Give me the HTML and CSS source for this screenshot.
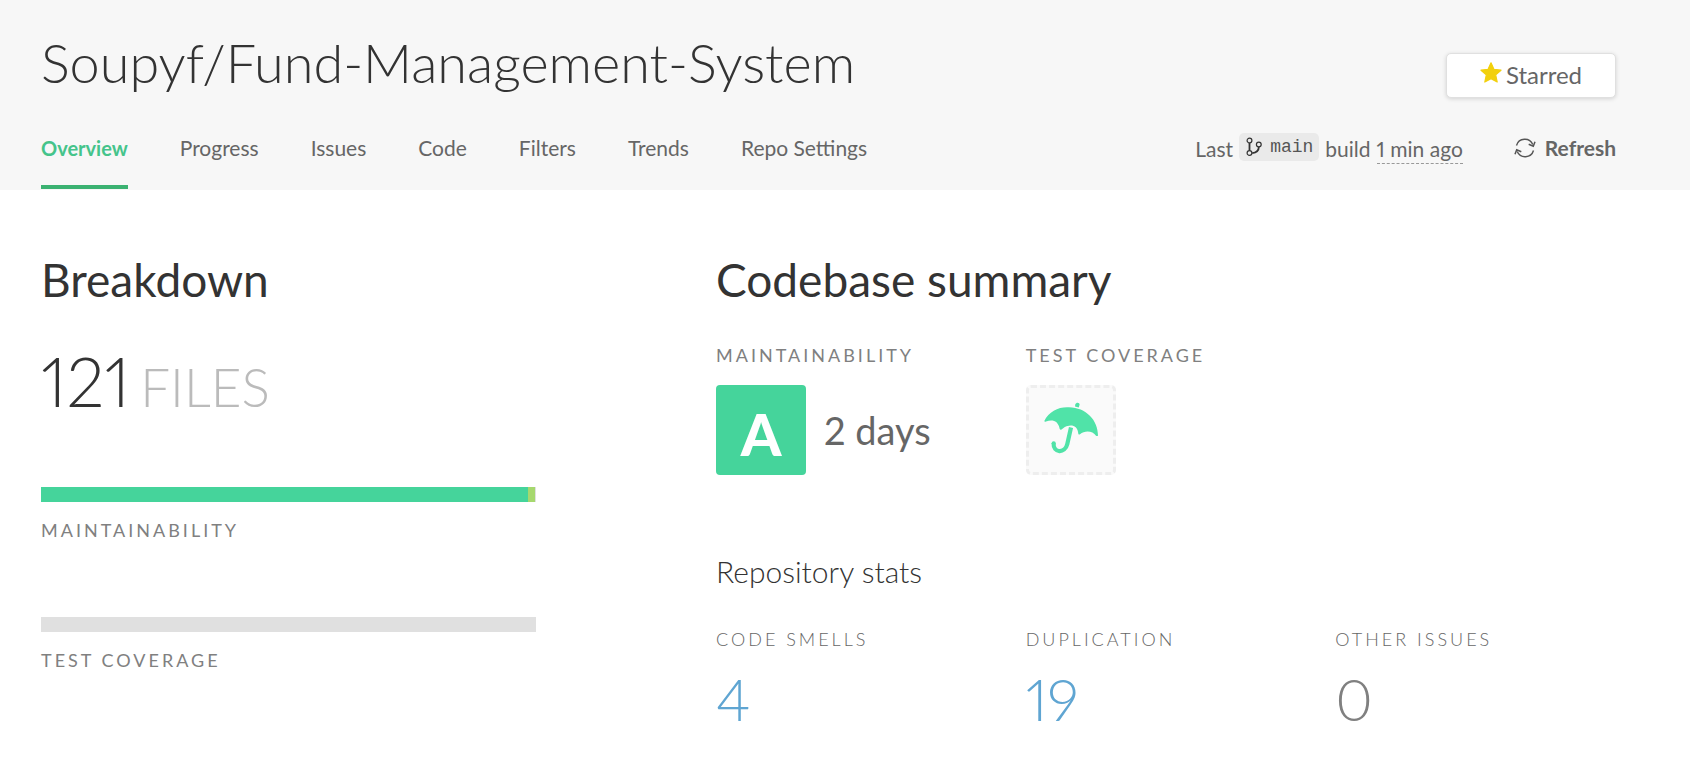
FILE: index.html
```html
<!DOCTYPE html>
<html lang="en">
<head>
<meta charset="utf-8">
<title>Soupyf/Fund-Management-System</title>
<link rel="stylesheet" href="styles.css">
</head>
<body>
<header class="repo-header">
  <div class="title-row">
    <h1 class="repo-title">Soupyf/Fund-Management-System</h1>
    <button class="star-button" type="button">
      <svg class="star-icon" viewBox="0 0 22 21" aria-hidden="true"><path d="M11 .8 13.9 7.300 21 8.200 15.700 12.900 17.200 20 11 16.700 4.800 20 6.300 12.900 1 8.200 8.100 7.300z" fill="#f2d00d" stroke="#f2d00d" stroke-width="1.200" stroke-linejoin="round"/></svg>
      <span>Starred</span>
    </button>
  </div>
  <div class="nav-row">
    <nav class="tabs">
      <a class="tab tab-active" href="#">Overview</a>
      <a class="tab" href="#">Progress</a>
      <a class="tab" href="#">Issues</a>
      <a class="tab" href="#">Code</a>
      <a class="tab" href="#">Filters</a>
      <a class="tab" href="#">Trends</a>
      <a class="tab" href="#">Repo Settings</a>
    </nav>
    <div class="build">
      <span>Last</span>
      <span class="branch">
        <svg class="branch-icon" viewBox="0 0 16 20" aria-hidden="true"><g fill="none" stroke="#333" stroke-width="1.200"><circle cx="3.500" cy="3.500" r="2.400"/><circle cx="3.500" cy="16" r="2.400"/><circle cx="12.800" cy="7.500" r="2.400"/></g><path d="M3.500 6v7.500M12.800 10c0 3-1.500 5.500-6.600 6.200" fill="none" stroke="#333" stroke-width="1.800"/></svg>
        <code class="branch-name">main</code>
      </span>
      <span>build</span>
      <time class="build-time">1 min ago</time>
    </div>
    <button class="refresh" type="button">
      <svg class="refresh-icon" viewBox="0 0 20 20" aria-hidden="true"><g fill="none" stroke="#555" stroke-width="1.400"><path d="M1.500 7.500A8.700 8.700 0 0 1 17.800 6.500M18.500 12.500A8.700 8.700 0 0 1 2.200 13.500"/></g><path d="M13.700 6.300 18.300 8.200 20 3.800M6.300 13.700 1.700 11.800 0 16.200" fill="none" stroke="#555" stroke-width="1.500"/></svg>
      <span>Refresh</span>
    </button>
  </div>
</header>
<main class="content">
  <section class="breakdown">
    <h2 class="section-title">Breakdown</h2>
    <p class="files"><span class="files-count">121</span><span class="files-unit">FILES</span></p>
    <div class="metric">
      <div class="bar"><span class="bar-a"></span><span class="bar-b"></span></div>
      <h3 class="label">Maintainability</h3>
    </div>
    <div class="metric">
      <div class="bar"></div>
      <h3 class="label">Test coverage</h3>
    </div>
  </section>
  <section class="summary">
    <h2 class="section-title">Codebase summary</h2>
    <div class="ratings">
      <div>
        <h3 class="label">Maintainability</h3>
        <div class="rating"><span class="grade">A</span><span class="debt">2 days</span></div>
      </div>
      <div>
        <h3 class="label">Test coverage</h3>
        <a class="coverage" href="#" aria-label="Set up test coverage">
          <svg class="umbrella" viewBox="0 0 54 52" aria-hidden="true"><g fill="#50e3a8"><path d="M.3 19C5 9 15 4.500 25 5.200 42 5.500 54 18 54 33.500Q53.500 34.500 52 33.800C49 29 41 28 36 32.300 35 33 34.300 32.500 34.200 31 33.500 25.500 30.500 23.500 26.500 23.600 22 23.800 20.500 25.500 17.500 27.500 16 28.300 15.600 27 15.400 25.800 14 19.500 9 17 2 19.600 1 20 .3 19.800.3 19zM31 4.600 31.300 2.300C32 0 35.800 0 35.600 2.800L34.700 5.600z"/></g><path d="M27 25.500 23.300 42C21 52 9 51 9.600 41.500" fill="none" stroke="#50e3a8" stroke-width="4.200"/><circle cx="9.700" cy="41.300" r="2.100" fill="#50e3a8"/></svg>
        </a>
      </div>
    </div>
    <h2 class="sub-title">Repository stats</h2>
    <div class="stats">
      <div><h3 class="label label-light">Code smells</h3><a class="stat" href="#">4</a></div>
      <div><h3 class="label label-light">Duplication</h3><a class="stat" href="#">19</a></div>
      <div><h3 class="label label-light">Other issues</h3><span class="stat stat-zero">0</span></div>
    </div>
  </section>
</main>
</body>
</html>
```
FILE: styles.css
```css
* { box-sizing: border-box; }
body { margin: 0; background: #fff; color: #666; font-family: Lato, "Open Sans", sans-serif; font-size: 21px; line-height: 28px; font-variant-numeric: proportional-nums; }
h1, h2, h3, p { margin: 0; font-weight: 400; }
a { color: inherit; text-decoration: none; }
button { font: inherit; color: inherit; cursor: pointer; }

.repo-header { background: #f7f7f7; padding: 27px 74px 0 41px; }
.title-row { display: flex; align-items: center; justify-content: space-between; }
.repo-title { color: #333; font-size: 54px; line-height: 64px; font-weight: 300; }
.star-button { display: flex; align-items: center; justify-content: center; gap: 4px; width: 170px; height: 45px; margin-top: 26px; padding: 0 0 2px; background: #fff; border: 1px solid #e0e0e0; border-radius: 5px; box-shadow: 0 1px 4px rgba(0, 0, 0, .15); font-size: 24px; }
.star-icon { width: 22px; height: 21px; margin-bottom: 5px; }

.nav-row { display: flex; align-items: flex-start; margin-top: 23px; }
.tabs { display: flex; gap: 52px; margin-right: auto; }
.tab { padding: 13px 0 23px; border-bottom: 4px solid transparent; margin-bottom: 1px; }
.tab-active { color: #45c48b; font-size: 20px; font-weight: 700; border-bottom-color: #3bb272; }
.build { display: flex; align-items: baseline; gap: 6px; padding-top: 12px; }
.branch { display: flex; align-items: center; gap: 8px; padding: 0 6px 0 7px; border-radius: 5px; background: #eaeaea; color: #333; }
.branch-icon { width: 16px; height: 20px; }
.branch-name { font-family: "Liberation Mono", monospace; font-size: 18px; color: #555; }
.build-time { border-bottom: 1px dashed #999; }
.refresh { display: flex; align-items: center; gap: 10px; margin-left: 52px; padding: 13px 0 0; border: 0; background: none; font-weight: 700; }
.refresh-icon { width: 20px; height: 20px; overflow: visible; }

.content { display: grid; grid-template-columns: 495fr 929fr; column-gap: 180px; padding: 64px 45px 40px 41px; }
.section-title { color: #333; font-size: 46px; line-height: 52px; }
.files { display: flex; align-items: baseline; gap: 10px; margin-top: 35px; line-height: 80px; font-weight: 300; }
.files-count { color: #333; font-size: 68px; }
.files-unit { color: #bbb; font-size: 53px; }
.metric { margin-top: 60px; }
.metric + .metric { margin-top: 73px; }
.bar { display: flex; height: 15px; margin-bottom: 15px; background: #e0e0e0; }
.bar-a { width: 98.4%; background: #45d49b; }
.bar-b { width: 1.4%; background: #a6d86e; }
.label { font-size: 18px; line-height: 27px; letter-spacing: 3px; color: #808080; text-transform: uppercase; white-space: nowrap; }
.label-light { font-weight: 300; color: #666; }

.ratings, .stats { display: grid; grid-template-columns: repeat(3, 1fr); }
.ratings { margin-top: 36px; }
.rating { display: flex; align-items: center; gap: 18px; margin-top: 16px; }
.grade { display: flex; align-items: center; justify-content: center; width: 90px; height: 90px; padding-top: 8px; border-radius: 4px; background: #45d49b; color: #fff; font-size: 58px; font-weight: 900; }
.debt { font-size: 38px; }
.coverage { display: flex; align-items: center; justify-content: center; width: 90px; height: 90px; margin-top: 16px; padding-bottom: 4px; border: 3px dashed #eee; border-radius: 5px; background: #fafafa; }
.umbrella { width: 54px; height: 52px; }
.sub-title { margin-top: 78px; color: #333; font-size: 30px; line-height: 36px; font-weight: 300; }
.stats { margin-top: 37px; }
.stat { display: block; margin-top: 12px; font-size: 58px; line-height: 68px; font-weight: 300; color: #5fa5d2; }
.stat-zero { color: #808080; }
```
